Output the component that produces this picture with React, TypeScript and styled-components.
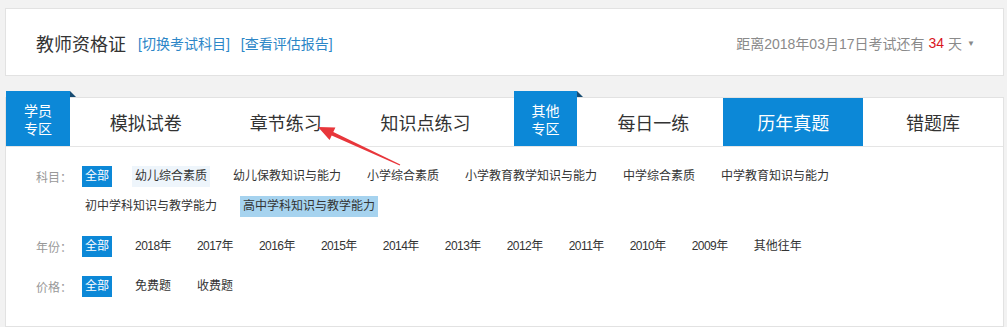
import React from "react";
import styled, { createGlobalStyle } from "styled-components";

const GlobalStyle = createGlobalStyle`
  html, body { margin: 0; padding: 0; background: #f2f2f2; }
  body { font-family: "Liberation Sans", "Noto Sans CJK SC", sans-serif; }
  * { box-sizing: border-box; }
`;

const BLUE = "#0c88d7";

const Page = styled.div`
  position: relative;
  width: 1007px;
  height: 327px;
  padding: 8px 3px 0 5px;
  overflow: hidden;
`;

const HeaderCard = styled.div`
  height: 68px;
  background: #fff;
  border: 1px solid #e2e2e2;
  display: flex;
  align-items: center;
  padding: 2px 28px 0 30px;
`;

const Title = styled.h1`
  margin: 0;
  font-size: 18px;
  font-weight: normal;
  color: #333;
  font-family: "Noto Sans CJK SC", sans-serif;
`;

const Link = styled.a<{ $first?: boolean }>`
  font-size: 14px;
  color: #2c86c7;
  margin-left: ${(p) => (p.$first ? "12px" : "11px")};
  font-family: "Liberation Sans", "Noto Sans CJK SC", sans-serif;
  cursor: pointer;
`;

const Countdown = styled.div`
  margin-left: auto;
  font-size: 14px;
  color: #8a8a8a;
  display: flex;
  align-items: center;
  font-family: "Liberation Sans", "Noto Sans CJK SC", sans-serif;
`;

const Days = styled.span`
  color: #d9141c;
  margin: 0 4px;
`;

const Caret = styled.span`
  font-size: 8px;
  margin-left: 5px;
  color: #888;
`;

const MainCard = styled.div`
  margin-top: 21px;
  height: 230px;
  background: #fff;
  border: 1px solid #e2e2e2;
`;

const TabBar = styled.div`
  display: flex;
  height: 49px;
  border-bottom: 1px solid #e5e5e5;
`;

const Badge = styled.div<{ $gap?: number }>`
  position: relative;
  width: 64px;
  height: 55px;
  margin-top: -7px;
  margin-left: ${(p) => p.$gap ?? 0}px;
  margin-right: 6px;
  background: ${BLUE};
  color: #fff;
  font-size: 14px;
  line-height: 18px;
  display: flex;
  flex-direction: column;
  align-items: center;
  justify-content: center;
  font-family: "Noto Sans CJK SC", sans-serif;
  &::after {
    content: "";
    position: absolute;
    top: 0;
    right: -6px;
    width: 0;
    height: 0;
    border-left: 6px solid #174c72;
    border-top: 6px solid transparent;
  }
`;

const Tab = styled.div<{ $active?: boolean }>`
  width: 140px;
  height: 48px;
  line-height: 48px;
  text-align: center;
  font-size: 18px;
  color: ${(p) => (p.$active ? "#fff" : "#333")};
  background: ${(p) => (p.$active ? BLUE : "transparent")};
  font-family: "Noto Sans CJK SC", sans-serif;
`;

const Filters = styled.div`
  padding: 19px 30px 0 30px;
  display: flex;
  flex-direction: column;
  gap: 19px;
`;

const FilterRow = styled.div`
  display: flex;
  align-items: flex-start;
`;

const Label = styled.div`
  width: 46px;
  flex: none;
  height: 21px;
  line-height: 21px;
  font-size: 12px;
  color: #999;
  font-family: "Noto Sans CJK SC", sans-serif;
`;

const Options = styled.div`
  display: flex;
  flex-wrap: wrap;
  row-gap: 9px;
  flex: 1;
`;

type Mode = "all" | "soft" | "strong" | undefined;

const Option = styled.span<{ $mode?: Mode; $tight?: boolean }>`
  height: 21px;
  line-height: 21px;
  padding: 0 3px;
  margin-right: 20px;
  font-size: 12px;
  white-space: nowrap;
  letter-spacing: ${(p) => (p.$tight ? "-0.55px" : "0")};
  font-family: "Liberation Sans", "Noto Sans CJK SC", sans-serif;
  color: ${(p) => (p.$mode === "all" ? "#fff" : "#333")};
  background: ${(p) =>
    p.$mode === "all"
      ? BLUE
      : p.$mode === "soft"
      ? "#eef5fb"
      : p.$mode === "strong"
      ? "#a6d3ef"
      : "transparent"};
`;

const Arrow = styled.svg`
  position: absolute;
  left: 0;
  top: 0;
  pointer-events: none;
`;

const subjects: { t: string; m?: Mode }[] = [
  { t: "全部", m: "all" },
  { t: "幼儿综合素质", m: "soft" },
  { t: "幼儿保教知识与能力" },
  { t: "小学综合素质" },
  { t: "小学教育教学知识与能力" },
  { t: "中学综合素质" },
  { t: "中学教育知识与能力" },
  { t: "初中学科知识与教学能力" },
  { t: "高中学科知识与教学能力", m: "strong" },
];

const years = [
  "2018年",
  "2017年",
  "2016年",
  "2015年",
  "2014年",
  "2013年",
  "2012年",
  "2011年",
  "2010年",
  "2009年",
];

export default function App() {
  return (
    <>
      <GlobalStyle />
      <Page>
        <HeaderCard>
          <Title>教师资格证</Title>
          <Link $first>[切换考试科目]</Link>
          <Link>[查看评估报告]</Link>
          <Countdown>
            距离2018年03月17日考试还有<Days>34</Days>天<Caret>▼</Caret>
          </Countdown>
        </HeaderCard>
        <MainCard>
          <TabBar>
            <Badge>
              <span>学员</span>
              <span>专区</span>
            </Badge>
            <Tab>模拟试卷</Tab>
            <Tab>章节练习</Tab>
            <Tab>知识点练习</Tab>
            <Badge $gap={18}>
              <span>其他</span>
              <span>专区</span>
            </Badge>
            <Tab>每日一练</Tab>
            <Tab $active>历年真题</Tab>
            <Tab>错题库</Tab>
          </TabBar>
          <Filters>
            <FilterRow>
              <Label>科目：</Label>
              <Options>
                {subjects.map((s) => (
                  <Option key={s.t} $mode={s.m}>
                    {s.t}
                  </Option>
                ))}
              </Options>
            </FilterRow>
            <FilterRow>
              <Label>年份：</Label>
              <Options>
                <Option $mode="all">全部</Option>
                {years.map((y) => (
                  <Option key={y} $tight>
                    {y}
                  </Option>
                ))}
                <Option>其他往年</Option>
              </Options>
            </FilterRow>
            <FilterRow>
              <Label>价格：</Label>
              <Options>
                <Option $mode="all">全部</Option>
                <Option>免费题</Option>
                <Option>收费题</Option>
              </Options>
            </FilterRow>
          </Filters>
        </MainCard>
        <Arrow width="1007" height="327" viewBox="0 0 1007 327">
          <polygon
            points="318,127 335.4,127.4 333.3,131.9 400.3,164.5 399.7,165.5 331.7,135.5 329.6,140"
            fill="#e8363b"
          />
        </Arrow>
      </Page>
    </>
  );
}
